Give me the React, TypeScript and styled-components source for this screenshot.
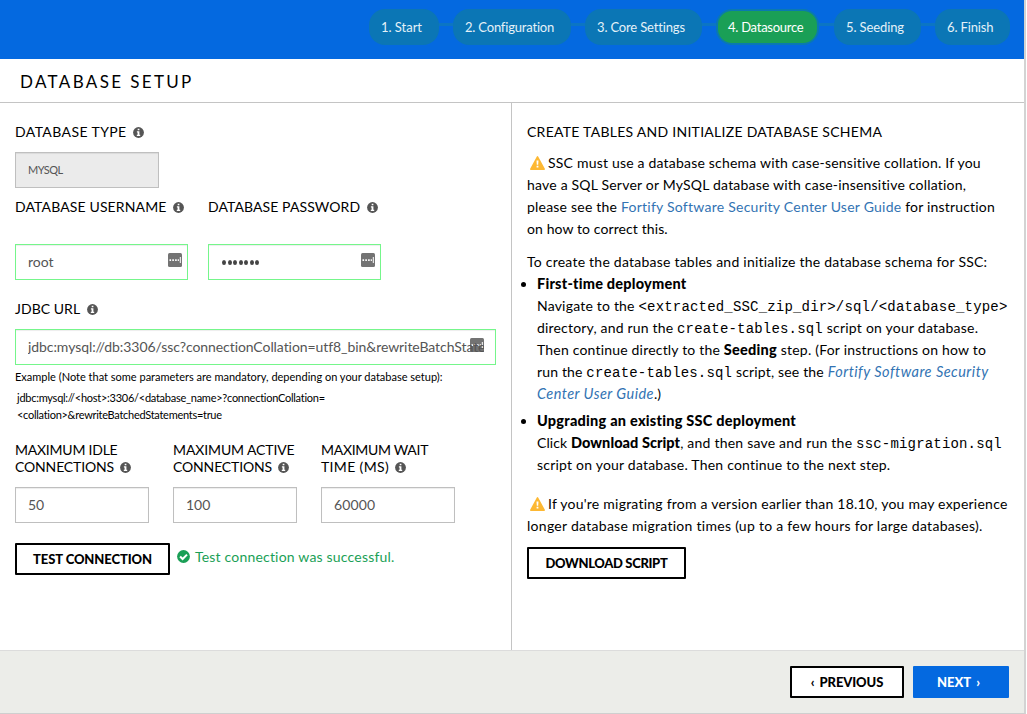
import React from 'react';
import styled, { createGlobalStyle } from 'styled-components';

const GlobalStyle = createGlobalStyle`
  * { box-sizing: border-box; }
  body { margin: 0; background: #fff; font-family: Lato, "Liberation Sans", sans-serif; font-size: 14px; color: #000; font-variant-ligatures: none; }
`;

const Window = styled.div`
  width: 1026px;
  height: 714px;
  display: flex;
  flex-direction: column;
  border-right: 2px solid #d3d3d3;
  border-bottom: 1px solid #cfcfcf;
  overflow: hidden;
`;

const TopBar = styled.header`
  height: 59px;
  flex: none;
  padding: 9px 14px 0 0;
  display: flex;
  justify-content: flex-end;
  align-items: flex-start;
  background: #0469e0;
`;

const Connector = styled.span<{ $w: number }>`
  width: ${p => p.$w}px;
  height: 3px;
  margin-top: 14px;
  background: #0b75c4;
`;

const Step = styled.div<{ $w: number; $ls: number; $active?: boolean }>`
  width: ${p => p.$w}px;
  height: 36px;
  padding-left: ${p => (p.$active ? 10 : 12)}px;
  border-radius: 16px;
  border: ${p => (p.$active ? '2px solid #0a79b0' : '0')};
  background: ${p => (p.$active ? '#1a9f56' : '#0b76b5')};
  color: ${p => (p.$active ? '#fff' : '#e4f1f8')};
  font-size: 13px;
  line-height: ${p => (p.$active ? 33 : 37)}px;
  letter-spacing: ${p => p.$ls}px;
  white-space: nowrap;
`;

const TitleBar = styled.div`
  height: 44px;
  flex: none;
  padding-left: 20px;
  border-bottom: 1px solid #c4c4c4;
`;

const Title = styled.h1`
  margin: 0;
  font-size: 17px;
  font-weight: 400;
  line-height: 46px;
  letter-spacing: 2.35px;
`;

const Body = styled.main`
  flex: 1;
  display: flex;
  min-height: 0;
`;

const FormPane = styled.section`
  width: 512px;
  flex: none;
  padding: 20px 15px 0;
  border-right: 1px solid #c4c4c4;
`;

const InfoPane = styled.section`
  flex: 1;
  min-width: 0;
  padding: 20px 0 0 15px;
`;

const Row = styled.div<{ $gap?: number; $mt?: number }>`
  display: flex;
  align-items: flex-start;
  gap: ${p => p.$gap ?? 0}px;
  margin-top: ${p => p.$mt ?? 0}px;
`;

const Field = styled.div<{ $w: number }>`
  width: ${p => p.$w}px;
`;

const Label = styled.label<{ $mb: number; $h?: number }>`
  display: block;
  margin-bottom: ${p => p.$mb}px;
  line-height: ${p => p.$h ?? 18}px;
  white-space: nowrap;
`;

const T = styled.span<{ $ls?: number }>`
  letter-spacing: ${p => p.$ls ?? 0}px;
  white-space: pre;
`;

const InfoSvg = styled.svg`
  width: 11px;
  height: 11px;
  margin-left: 6.4px;
  vertical-align: -1px;
`;

const Info = () => (
  <InfoSvg viewBox="0 0 11 11">
    <circle cx="5.5" cy="5.5" r="5.4" fill="#555" />
    <path d="M4.7 1.8h1.7v1.5H4.7zM3.9 4.3h2.5v3.5h.8v1.1H3.8V7.8h.8V5.4h-.7z" fill="#fff" />
  </InfoSvg>
);

const InputBox = styled.div<{ $w: number; $valid?: boolean; $disabled?: boolean }>`
  width: ${p => p.$w}px;
  height: 36px;
  padding: 0 5px 2px 12px;
  display: flex;
  align-items: center;
  position: relative;
  border: 1px solid ${p => (p.$valid ? '#75f68b' : '#bfbfbf')};
  background: ${p => (p.$disabled ? '#ebebeb' : '#fff')};
  box-shadow: inset 0 1px 1px rgba(0, 0, 0, 0.075);
  color: #555;
  font-size: ${p => (p.$disabled ? 11 : 14)}px;
  white-space: nowrap;
`;

const UrlValue = styled(T)`
  z-index: 1;
  width: 456px;
  overflow: hidden;
`;

const KeySvg = styled.svg<{ $right: number }>`
  position: absolute;
  z-index: 0;
  right: ${p => p.$right}px;
  top: 8px;
  width: 14px;
  height: 14px;
`;

const KeyBadge = ({ right = 5 }: { right?: number }) => (
  <KeySvg $right={right} viewBox="0 0 14 14">
    <rect width="14" height="14" rx="1.5" fill="#737373" />
    <path d="M1.5 6.2h1.6v1.7H1.5zM4.3 6.2h1.6v1.7H4.3zM7.1 6.2h1.6v1.7H7.1zM9.7 6.2h1.2v1.7H9.7zM11.8 4h1v6h-1z" fill="#fff" />
  </KeySvg>
);

const Dots = styled.span`
  display: flex;
  gap: 1.5px;
  padding: 2px 0 0 1px;
`;

const Dot = styled.i`
  width: 4px;
  height: 5px;
  border-radius: 50%;
  background: #444;
`;

const Note = styled.p<{ $mt: number; $pl?: number }>`
  margin: ${p => p.$mt}px 0 0;
  padding-left: ${p => p.$pl ?? 0}px;
  font-size: 11px;
  line-height: 17px;
  white-space: nowrap;
`;

const Button = styled.button<{ $w: number; $ls: number; $primary?: boolean; $mt?: number }>`
  width: ${p => p.$w}px;
  height: 32px;
  flex: none;
  display: flex;
  align-items: center;
  justify-content: center;
  gap: 5px;
  margin: ${p => p.$mt ?? 0}px 0 0;
  padding: 0;
  border: 2px solid ${p => (p.$primary ? '#0469e0' : '#000')};
  border-radius: 1px;
  background: ${p => (p.$primary ? '#0469e0' : '#fff')};
  color: ${p => (p.$primary ? '#fff' : '#000')};
  font: 900 13px/28px Lato, "Liberation Sans", sans-serif;
  letter-spacing: ${p => p.$ls}px;
  white-space: pre;
`;

const NavButton = styled(Button)<{ $pr?: number }>`
  padding-right: ${p => p.$pr ?? 0}px;
`;

const Success = styled.div`
  display: flex;
  align-items: center;
  gap: 5px;
  height: 27px;
  color: #1a9f56;
  line-height: 26px;
  white-space: nowrap;
`;

const Check = () => (
  <svg width="13" height="13" viewBox="0 0 13 13">
    <circle cx="6.5" cy="6.5" r="6.4" fill="#1a9f56" />
    <path d="M3.1 6.5l2.5 2.5 4.4-4.4" fill="none" stroke="#fff" strokeWidth="2" />
  </svg>
);

const WarnSvg = styled.svg`
  width: 15px;
  height: 14px;
  margin: 0 3px;
  vertical-align: -1.5px;
`;

const Warn = () => (
  <WarnSvg viewBox="0 0 15 14">
    <path d="M7.5.8L14.2 13.2H.8z" fill="#fdb833" stroke="#fdb833" strokeWidth="1.5" strokeLinejoin="round" />
    <path d="M6.5 4.4h2l-.3 4.3H6.8zM6.6 9.8h1.8v1.8H6.6z" fill="#fff" />
  </WarnSvg>
);

const Line = styled.div`
  height: 22px;
  line-height: 22px;
  white-space: nowrap;
`;

const Block = styled.div<{ $mt: number }>`
  margin-top: ${p => p.$mt}px;
`;

const List = styled.ul`
  margin: 0;
  padding: 0 0 0 10px;
`;

const Item = styled.li<{ $mt?: number }>`
  margin-top: ${p => p.$mt ?? 0}px;
  list-style: none;
`;

const Bullet = styled.span`
  display: inline-block;
  width: 5px;
  height: 5px;
  margin: 0 11px 0 -16px;
  border-radius: 50%;
  background: #000;
  vertical-align: 2.5px;
`;

const B = styled(T)`
  font-size: 14.5px;
  font-weight: 900;
`;

const Code = styled.code`
  font: 14px/20px "Liberation Mono", monospace;
  letter-spacing: 0.18px;
`;

const Link = styled.a<{ $ls: number; $italic?: boolean }>`
  color: #3273b3;
  letter-spacing: ${p => p.$ls}px;
  font-style: ${p => (p.$italic ? 'italic' : 'normal')};
  font-size: ${p => (p.$italic ? 14.5 : 14)}px;
  text-decoration: none;
`;

const Footer = styled.footer`
  height: 63px;
  flex: none;
  padding: 15px 15px 0 0;
  display: flex;
  justify-content: flex-end;
  gap: 9px;
  background: #ecede9;
  border-top: 1px solid #dcdcdc;
`;

export default function App() {
  return (
    <Window>
      <GlobalStyle />
      <TopBar>
        <Step $w={70} $ls={-0.03}>1. Start</Step>
        <Connector $w={14} />
        <Step $w={118} $ls={-0.19}>2. Configuration</Step>
        <Connector $w={14} />
        <Step $w={117} $ls={-0.16}>3. Core Settings</Step>
        <Connector $w={14} />
        <Step $w={103} $ls={-0.26} $active>4. Datasource</Step>
        <Connector $w={15} />
        <Step $w={87} $ls={-0.11}>5. Seeding</Step>
        <Connector $w={14} />
        <Step $w={75} $ls={-0.13}>6. Finish</Step>
      </TopBar>
      <TitleBar><Title>DATABASE SETUP</Title></TitleBar>
      <Body>
        <FormPane>
          <Label $mb={11}><T $ls={0.4}>DATABASE TYPE</T><Info /></Label>
          <InputBox $w={144} $disabled><T $ls={-0.5}>MYSQL</T></InputBox>
          <Row $gap={20} $mt={10}>
            <Field $w={173}>
              <Label $mb={28}><T $ls={0.13}>DATABASE USERNAME</T><Info /></Label>
              <InputBox $w={173} $valid><T>root</T><KeyBadge /></InputBox>
            </Field>
            <Field $w={173}>
              <Label $mb={28}><T $ls={0.09}>DATABASE PASSWORD</T><Info /></Label>
              <InputBox $w={173} $valid>
                <Dots>{Array.from({ length: 7 }, (_, i) => <Dot key={i} />)}</Dots>
                <KeyBadge />
              </InputBox>
            </Field>
          </Row>
          <Block $mt={20}>
            <Label $mb={11}><T $ls={0.04}>JDBC URL</T><Info /></Label>
            <InputBox $w={481} $valid>
              <KeyBadge right={11} />
              <UrlValue $ls={-0.07}>jdbc:mysql://db:3306/ssc?connectionCollation=utf8_bin&amp;rewriteBatchState</UrlValue>
            </InputBox>
          </Block>
          <Note $mt={3}>
            <T>Example (Note that some parameters are mandatory, depending on your database setup):</T>
          </Note>
          <Note $mt={4} $pl={2}>
            <T $ls={-0.26}>jdbc:mysql://&lt;host&gt;:3306/&lt;database_name&gt;?connectionCollation=</T><br />
            <T $ls={-0.28}>&lt;collation&gt;&amp;rewriteBatchedStatements=true</T>
          </Note>
          <Row $gap={24} $mt={18}>
            <Field $w={134}>
              <Label $mb={12} $h={17}><T $ls={-0.23}>MAXIMUM IDLE</T><br /><T $ls={-0.15}>CONNECTIONS</T><Info /></Label>
              <InputBox $w={134}><T>50</T></InputBox>
            </Field>
            <Field $w={124}>
              <Label $mb={12} $h={17}><T $ls={-0.12}>MAXIMUM ACTIVE</T><br /><T $ls={-0.15}>CONNECTIONS</T><Info /></Label>
              <InputBox $w={124}><T>100</T></InputBox>
            </Field>
            <Field $w={134}>
              <Label $mb={12} $h={17}><T $ls={-0.3}>MAXIMUM WAIT</T><br /><T $ls={0.34}>TIME (MS)</T><Info /></Label>
              <InputBox $w={134}><T $ls={0.14}>60000</T></InputBox>
            </Field>
          </Row>
          <Row $gap={7} $mt={20}>
            <Button $w={155} $ls={-0.1}>TEST CONNECTION</Button>
            <Success><Check /><T $ls={0.19}>Test connection was successful.</T></Success>
          </Row>
        </FormPane>
        <InfoPane>
          <Label $mb={11}><T $ls={0.27}>CREATE TABLES AND INITIALIZE DATABASE SCHEMA</T></Label>
          <Line><Warn /><T $ls={0.2}>SSC must use a database schema with case-sensitive collation. If you</T></Line>
          <Line><T $ls={0.2}>have a SQL Server or MySQL database with case-insensitive collation,</T></Line>
          <Line>
            <T $ls={0.21}>please see the </T>
            <Link $ls={0.25}>Fortify Software Security Center User Guide</Link>
            <T $ls={0.18}> for instruction</T>
          </Line>
          <Line><T $ls={0.1}>on how to correct this.</T></Line>
          <Block $mt={11}>
            <Line><T $ls={0.23}>To create the database tables and initialize the database schema for SSC:</T></Line>
            <List>
              <Item>
                <Line><Bullet /><B $ls={0.22}>First-time deployment</B></Line>
                <Line><T $ls={0.2}>Navigate to the </T><Code>&lt;extracted_SSC_zip_dir&gt;/sql/&lt;database_type&gt;</Code></Line>
                <Line><T $ls={0.18}>directory, and run the </T><Code>create-tables.sql</Code><T $ls={0.23}> script on your database.</T></Line>
                <Line><T $ls={0.19}>Then continue directly to the </T><B $ls={0.24}>Seeding</B><T $ls={0.21}> step. (For instructions on how to</T></Line>
                <Line>
                  <T $ls={0.15}>run the </T><Code>create-tables.sql</Code><T $ls={0.17}> script, see the </T>
                  <Link $ls={0.49} $italic>Fortify Software Security</Link>
                </Line>
                <Line><Link $ls={0.46} $italic>Center User Guide</Link><T>.)</T></Line>
              </Item>
              <Item $mt={5}>
                <Line><Bullet /><B $ls={0.24}>Upgrading an existing SSC deployment</B></Line>
                <Line><T $ls={0.1}>Click </T><B $ls={0.06}>Download Script</B><T $ls={0.22}>, and then save and run the </T><Code>ssc-migration.sql</Code></Line>
                <Line><T $ls={0.21}>script on your database. Then continue to the next step.</T></Line>
              </Item>
            </List>
          </Block>
          <Block $mt={17}>
            <Line><Warn /><T $ls={0.23}>If you're migrating from a version earlier than 18.10, you may experience</T></Line>
            <Line><T $ls={0.28}>longer database migration times (up to a few hours for large databases).</T></Line>
          </Block>
          <Button $w={159} $ls={-0.34} $mt={10}>DOWNLOAD SCRIPT</Button>
        </InfoPane>
      </Body>
      <Footer>
        <NavButton $w={114} $ls={-0.1}><span>‹</span><span>PREVIOUS</span></NavButton>
        <NavButton $w={96} $ls={0} $pr={5} $primary><span>NEXT</span><span>›</span></NavButton>
      </Footer>
    </Window>
  );
}
